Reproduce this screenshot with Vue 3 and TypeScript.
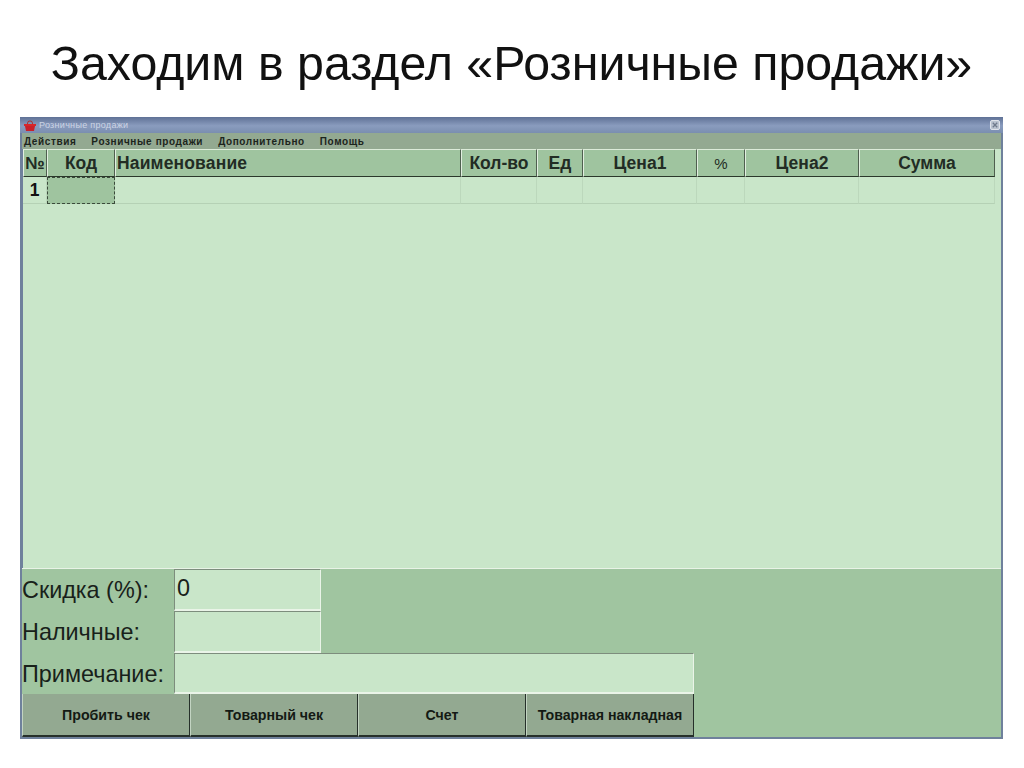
<script setup lang="ts">
interface Col { label: string; width: number; left?: boolean; small?: boolean }
const cols: Col[] = [
  { label: '№', width: 24 },
  { label: 'Код', width: 68 },
  { label: 'Наименование', width: 346, left: true },
  { label: 'Кол-во', width: 76 },
  { label: 'Ед', width: 46 },
  { label: 'Цена1', width: 114 },
  { label: '%', width: 48, small: true },
  { label: 'Цена2', width: 114 },
  { label: 'Сумма', width: 136 },
]
const menu = ['Действия', 'Розничные продажи', 'Дополнительно', 'Помощь']
const buttons = ['Пробить чек', 'Товарный чек', 'Счет', 'Товарная накладная']
</script>

<template>
  <main class="slide">
    <h1 class="heading">Заходим в раздел «Розничные продажи»</h1>
    <section class="window">
      <div class="titlebar">
        <svg class="app-icon" width="12" height="11" viewBox="0 0 12 11">
          <path d="M3.2 5 L4 1.6 Q6 0.2 8 1.6 L8.8 5" fill="none" stroke="#a33" stroke-width="1" />
          <rect x="0" y="4" width="12" height="2" fill="#d8262a" />
          <path d="M1 6 H11 L10 11 H2 Z" fill="#c9202a" />
        </svg>
        <span class="title-text">Розничные продажи</span>
        <svg class="close" width="10" height="10" viewBox="0 0 10 10">
          <rect x="0.5" y="0.5" width="9" height="9" rx="1.5" fill="#b9c2cf" stroke="#dfe3ea" />
          <path d="M2.8 2.8 L7.2 7.2 M7.2 2.8 L2.8 7.2" stroke="#6f7a8c" stroke-width="1.3" />
        </svg>
      </div>
      <nav class="menubar">
        <span v-for="m in menu" :key="m" class="menu-item">{{ m }}</span>
      </nav>
      <div class="grid-area">
        <div class="row header">
          <div
            v-for="c in cols"
            :key="c.label"
            class="hcell"
            :class="{ left: c.left, small: c.small }"
            :style="{ width: c.width + 'px' }"
          >{{ c.label }}</div>
        </div>
        <div class="row body-row">
          <div
            v-for="(c, i) in cols"
            :key="c.label"
            class="cell"
            :class="{ focus: i === 1, num: i === 0 }"
            :style="{ width: c.width + 'px' }"
          >{{ i === 0 ? '1' : '' }}</div>
        </div>
      </div>
      <div class="bottom">
        <div class="form">
          <div class="form-row">
            <label class="lbl">Скидка (%):</label>
            <div class="field short">0</div>
          </div>
          <div class="form-row">
            <label class="lbl">Наличные:</label>
            <div class="field short"></div>
          </div>
          <div class="form-row last">
            <label class="lbl">Примечание:</label>
            <div class="field wide"></div>
          </div>
        </div>
        <div class="buttons">
          <div v-for="b in buttons" :key="b" class="btn">{{ b }}</div>
        </div>
      </div>
    </section>
  </main>
</template>

<style>
html, body { margin: 0; background: #fff; }
</style>

<style scoped>
.slide {
  width: 1024px;
  height: 768px;
  overflow: hidden;
  background: #fff;
  font-family: "Liberation Sans", Arial, sans-serif;
  padding: 37px 21px 0 20px;
  box-sizing: border-box;
}
.heading {
  margin: 0 0 25px;
  height: 55px;
  font-size: 48.3px;
  line-height: 53px;
  font-weight: 400;
  color: #111;
  text-align: center;
  white-space: nowrap;
}
.window {
  width: 983px;
  height: 622px;
  background: #6f819c;
  padding: 0 2px 2px 3px;
  box-sizing: border-box;
  display: flex;
  flex-direction: column;
}
.titlebar {
  height: 16px;
  flex: none;
  display: flex;
  align-items: center;
  gap: 3px;
  background: linear-gradient(#5f7196, #8a9cbe 55%, #7a8eb0);
  margin: 0 -2px 0 -3px;
  padding: 0 3px 0 4px;
}
.title-text {
  flex: 1;
  font-size: 9px;
  color: #ccd4e4;
  letter-spacing: 0.3px;
}
.menubar {
  height: 16px;
  flex: none;
  display: flex;
  align-items: center;
  gap: 15px;
  background: #93a991;
  padding: 1px 0 0 2px;
  box-sizing: border-box;
  margin-left: -1px;
}
.menu-item {
  font-size: 10px;
  font-weight: 700;
  letter-spacing: 0.6px;
  color: #1c241c;
  white-space: nowrap;
}
.grid-area {
  flex: 1;
  background: #c9e6c9;
  min-height: 0;
}
.row { display: flex; }
.header {
  height: 28px;
  background: #c9e6c9;
}
.hcell {
  box-sizing: border-box;
  height: 28px;
  flex: none;
  background: #9fc49f;
  border-top: 1px solid #dcebd9;
  border-left: 1px solid #e2efe0;
  border-right: 1px solid #4f5f4f;
  border-bottom: 1px solid #2b382b;
  text-align: center;
  font-size: 17.5px;
  font-weight: 700;
  line-height: 27px;
  color: #222c24;
  overflow: hidden;
  white-space: nowrap;
}
.hcell.left { text-align: left; padding-left: 1px; letter-spacing: 0.15px; }
.hcell.small { font-size: 15px; font-weight: 400; }
.body-row { height: 27px; }
.cell {
  box-sizing: border-box;
  height: 27px;
  flex: none;
  border-right: 1px solid #bcd8bc;
  border-bottom: 1px solid #b5d1b5;
}
.cell.num {
  background: #c9e6c9;
  text-align: center;
  font-size: 17.5px;
  font-weight: 700;
  line-height: 26px;
  color: #111;
}
.cell.focus {
  background: #9fc49f;
  border: 1px dashed #3b4a3b;
}
.bottom {
  flex: none;
  height: 169px;
  background: #a0c5a0;
  border-top: 1px solid #e8f3e6;
  box-sizing: border-box;
  display: flex;
  flex-direction: column;
  margin-left: -1px;
}
.form { flex: none; height: 125px; display: flex; flex-direction: column; }
.form-row { height: 42px; display: flex; }
.form-row.last { height: 41px; }
.lbl {
  width: 152px;
  flex: none;
  font-size: 23.4px;
  line-height: 42px;
  color: #18211a;
  white-space: nowrap;
}
.field {
  box-sizing: border-box;
  height: 100%;
  background: #c9e6c9;
  border-top: 1px solid #7d8d7d;
  border-left: 1px solid #7d8d7d;
  border-right: 1px solid #eaf4e8;
  border-bottom: 2px solid #eaf4e8;
  font-size: 23.4px;
  line-height: 36px;
  padding-left: 2px;
  color: #18211a;
}
.short { width: 147px; }
.wide { width: 520px; }
.buttons { flex: none; height: 43px; display: flex; }
.btn {
  width: 168px;
  box-sizing: border-box;
  height: 43px;
  background: #93a991;
  border-left: 1px solid #c3d4c2;
  border-right: 1px solid #26302a;
  border-bottom: 2px solid #26302a;
  text-align: center;
  font-size: 14.2px;
  font-weight: 700;
  line-height: 43px;
  color: #141a14;
  white-space: nowrap;
}
</style>
